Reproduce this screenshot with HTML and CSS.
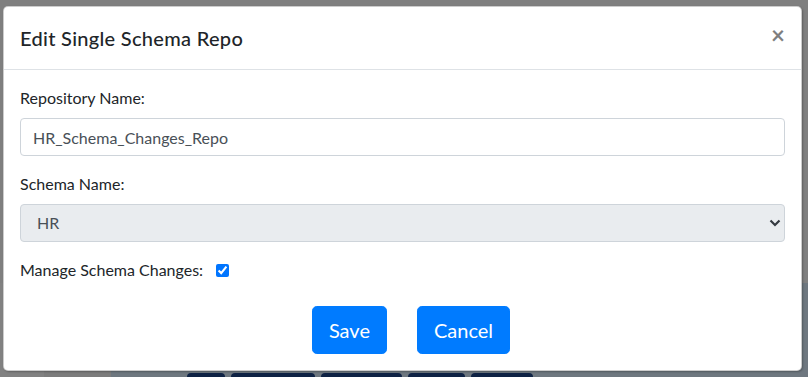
FILE: index.html
```html
<!DOCTYPE html>
<html lang="en">
<head>
    <meta charset="UTF-8">
    <title>Edit Single Schema Repo</title>
    <link rel="stylesheet" href="styles.css">
</head>
<body>
    <!-- page behind the backdrop -->
    <div class="page">
        <div class="page-top"></div>
        <div class="page-bottom">
            <div class="page-side"></div>
            <div class="page-main">
                <div class="tab-row">
                    <span class="tab tab-1"></span>
                    <span class="tab tab-2"></span>
                    <span class="tab tab-3"></span>
                    <span class="tab tab-4"></span>
                    <span class="tab tab-5"></span>
                </div>
            </div>
        </div>
    </div>

    <div class="modal">
        <div class="modal-header">
            <h5 class="modal-title">Edit Single Schema Repo</h5>
            <button type="button" class="close">&times;</button>
        </div>
        <div class="modal-body">
            <form id="repoForm">
                <div class="form-group">
                    <label for="repoName">Repository Name:</label>
                    <input type="text" id="repoName" class="form-control" value="HR_Schema_Changes_Repo">
                </div>
                <div class="form-group">
                    <label for="schemaName">Schema Name:</label>
                    <div class="select-wrap">
                        <select id="schemaName" class="form-control" disabled>
                            <option>HR</option>
                        </select>
                        <svg class="chevron" width="12" height="8" viewBox="0 0 12 8">
                            <path d="M1.5 1.5 L6 6 L10.5 1.5" fill="none" stroke="#343a40" stroke-width="2.2"/>
                        </svg>
                    </div>
                </div>
                <div class="form-group check-group">
                    <label for="manage">Manage Schema Changes:</label>
                    <input type="checkbox" id="manage" checked>
                </div>
                <div class="form-actions">
                    <button type="submit" class="btn btn-lg">Save</button>
                    <button type="button" class="btn btn-lg">Cancel</button>
                </div>
            </form>
        </div>
    </div>
</body>
</html>
```

FILE: styles.css
```css
* {
    margin: 0;
    padding: 0;
    box-sizing: border-box;
}

body {
    font-family: Lato, "Noto Sans", sans-serif;
    font-size: 16px;
    line-height: 1.5;
    color: #212529;
    background-color: #7f7f7f;
    width: 808px;
    height: 377px;
    overflow: hidden;
    position: relative;
}

/* Dimmed page behind the modal */
.page {
    height: 377px;
    display: flex;
    flex-direction: column;
}

.page-top {
    height: 283px;
}

.page-bottom {
    flex: 1;
    display: flex;
}

.page-side {
    width: 111px;
    background-color: #7c7c7c;
    border-left: 44px solid #818181;
}

.page-main {
    flex: 1;
    background-color: #6e777f;
    display: flex;
    align-items: flex-end;
}

.tab-row {
    display: flex;
    gap: 6px;
    margin-left: 76px;
    height: 4px;
}

.tab {
    background-color: #0e2244;
    border-radius: 4px 4px 0 0;
}

.tab-1 { width: 38px; }
.tab-2 { width: 84px; }
.tab-3 { width: 81px; }
.tab-4 { width: 57px; }
.tab-5 { width: 62px; }

/* Modal */
.modal {
    position: absolute;
    left: 3px;
    top: 6px;
    width: 799px;
    background-color: #fff;
    border: 1px solid rgba(0, 0, 0, 0.2);
    border-radius: 5px;
    box-shadow: 1px 1px 2px rgba(0, 0, 0, 0.25);
}

.modal-header {
    display: flex;
    align-items: flex-start;
    justify-content: space-between;
    padding: 16px;
    border-bottom: 1px solid #dee2e6;
}

.modal-title {
    font-size: 20px;
    font-weight: 500;
    line-height: 1.5;
    letter-spacing: 0.3px;
}

.close {
    background: none;
    border: none;
    font-family: Lato, "Noto Sans", sans-serif;
    font-size: 24px;
    font-weight: 700;
    line-height: 1;
    color: #000;
    opacity: 0.5;
    padding: 16px;
    margin: -16px -16px -16px auto;
    cursor: pointer;
}

.modal-body {
    padding: 16px;
}

.form-group {
    margin-bottom: 16px;
}

.form-group label {
    display: inline-block;
    margin-bottom: 8px;
    color: #212529;
}

.form-control {
    display: block;
    width: 100%;
    height: 38px;
    padding: 6px 12px;
    font-family: Lato, "Noto Sans", sans-serif;
    font-size: 16px;
    line-height: 1.5;
    color: #495057;
    background-color: #fff;
    border: 1px solid #ced4da;
    border-radius: 4px;
}

.select-wrap {
    position: relative;
}

select.form-control {
    appearance: none;
    -webkit-appearance: none;
    padding-left: 16px;
    background-color: #e9ecef;
    opacity: 1;
    color: #495057;
}

.chevron {
    position: absolute;
    right: 4px;
    top: 15px;
}

.check-group {
    display: flex;
    align-items: center;
    gap: 13px;
}

.check-group label {
    margin-bottom: 0;
}

.check-group input {
    width: 13px;
    height: 13px;
    accent-color: #0075ff;
}

.form-actions {
    display: flex;
    justify-content: center;
    gap: 30px;
    padding-left: 17px;
    margin-top: 24px;
}

.btn {
    font-family: Lato, "Noto Sans", sans-serif;
    color: #fff;
    background-color: #007bff;
    border: 1px solid #007bff;
    border-radius: 4.8px;
    padding: 8px 16px;
    font-size: 20px;
    line-height: 1.5;
    cursor: pointer;
}
```
